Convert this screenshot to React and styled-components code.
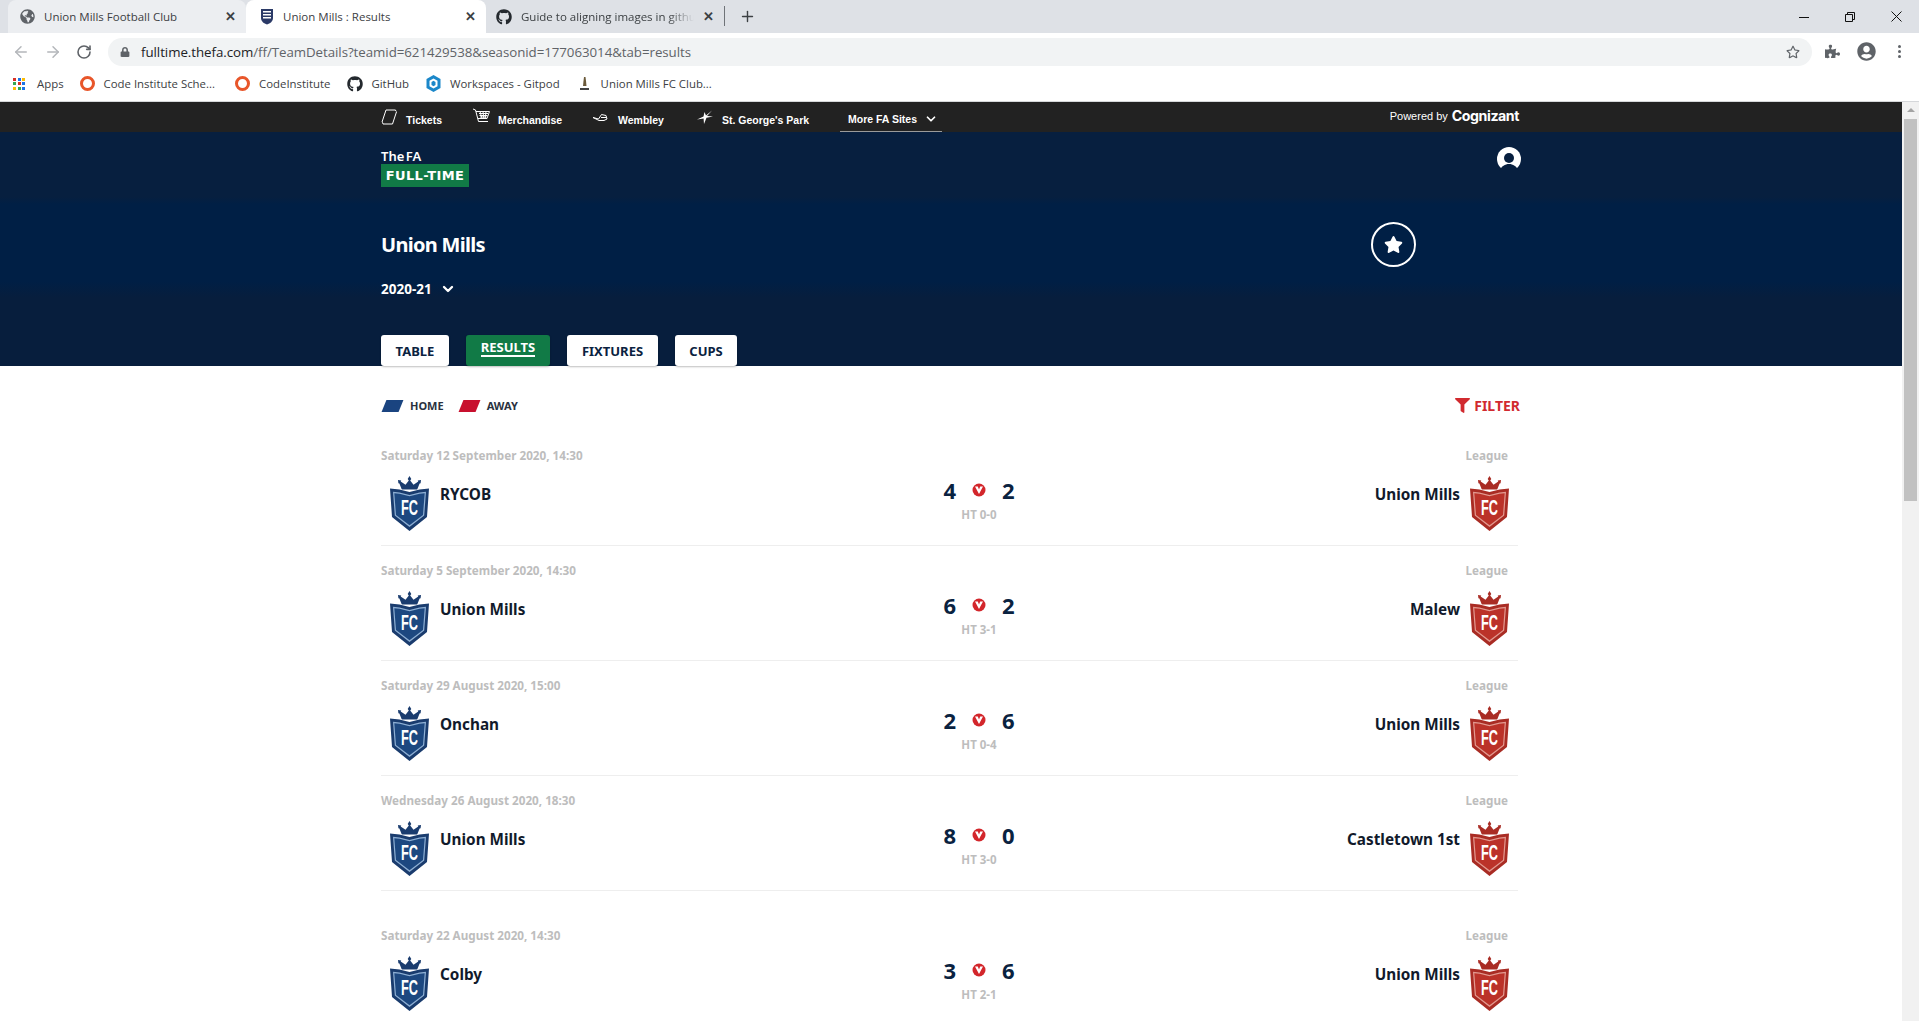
import React from 'react';
import styled, { createGlobalStyle } from 'styled-components';
import { ArrowLeft, ArrowRight, RotateCw, ChevronDown, Plus } from 'lucide-react';
import { FaGithub, FaGlobeAmericas, FaLock, FaPuzzlePiece, FaUserCircle, FaStar, FaFilter, FaRegStar } from 'react-icons/fa';

const GlobalStyle = createGlobalStyle`
  html, body { margin: 0; padding: 0; height: 100%; overflow: hidden; background: #fff; }
  * { box-sizing: border-box; }
`;

const Screen = styled.div`
  width: 1919px;
  height: 1021px;
  overflow: hidden;
  display: flex;
  flex-direction: column;
  font-family: "Noto Sans", Arial, sans-serif;
`;

/* browser chrome */
const TabStrip = styled.div`
  height: 33px;
  background: #dee1e6;
  display: flex;
  align-items: flex-end;
  padding-left: 8px;
  flex-shrink: 0;
`;
const Tab = styled.div`
  width: ${p => p.$w}px;
  height: 33px;
  display: flex;
  align-items: center;
  padding: 0 10px 0 ${p => p.$pad || 12}px;
  gap: 9px;
  color: #3c4043;
  font-family: "Open Sans", sans-serif;
  font-size: 11.5px;
  border-radius: 8px 8px 0 0;
  background: ${p => (p.$active ? '#fff' : p.$light ? '#eceef1' : 'transparent')};
  svg { flex-shrink: 0; }
`;
const TabLabel = styled.span`
  flex: 1;
  white-space: nowrap;
  overflow: hidden;
  mask-image: ${p => (p.$fade ? 'linear-gradient(to right, #000 85%, transparent)' : 'none')};
`;
const TabClose = styled.span`
  font-size: 13px;
  color: #3c4043;
  font-family: "Liberation Sans", sans-serif;
  font-weight: 700;
`;
const TabDivider = styled.div`
  width: 1px;
  height: 20px;
  background: #6f7378;
  margin: 0 14px 7px 0;
`;
const NewTab = styled.div`
  height: 33px;
  display: flex;
  align-items: center;
  color: #3c4043;
`;
const WindowButtons = styled.div`
  margin-left: auto;
  height: 33px;
  display: flex;
  align-items: center;
  gap: 36px;
  padding-right: 17px;
  color: #111;
`;

const Toolbar = styled.div`
  height: 33px;
  background: #fff;
  display: flex;
  align-items: center;
  padding: 4px 0 0 12px;
  color: #5f6368;
  flex-shrink: 0;
`;
const NavGroup = styled.div`
  display: flex;
  align-items: center;
  gap: 14px;
  width: 96px;
`;
const AddressBar = styled.div`
  width: 1704px;
  height: 28px;
  border-radius: 14px;
  background: #f1f3f4;
  display: flex;
  align-items: center;
  padding: 0 12px 0 12px;
  gap: 11px;
  font-family: "Open Sans", sans-serif;
  font-size: 13.3px;
  letter-spacing: -0.05px;
  color: #5f6368;
`;
const UrlText = styled.span`
  flex: 1;
  white-space: nowrap;
  b { font-weight: 400; color: #202124; }
`;
const ToolbarEnd = styled.div`
  display: flex;
  align-items: center;
  gap: 17px;
  margin-left: 13px;
  color: #5f6368;
`;
const Dots = styled.div`
  display: grid;
  gap: 2px;
  margin-left: 5px;
  span { width: 3px; height: 3px; border-radius: 50%; background: #5f6368; display: block; }
`;

const Bookmarks = styled.div`
  height: 36px;
  background: #fff;
  border-bottom: 1px solid #d5d7da;
  display: flex;
  align-items: center;
  padding-left: 13px;
  color: #3c4043;
  font-family: "Open Sans", sans-serif;
  font-size: 11.4px;
  flex-shrink: 0;
`;
const Bookmark = styled.div`
  display: flex;
  align-items: center;
  gap: ${p => p.$gap || 9}px;
  margin-right: ${p => p.$mr || 17}px;
  white-space: nowrap;
`;
const AppsGrid = styled.div`
  display: grid;
  grid-template-columns: repeat(3, 3px);
  gap: 1.5px;
`;
const AppDot = styled.i`
  width: 3px;
  height: 3px;
  background: ${p => p.$c};
`;
const Ring = styled.i`
  width: 15px;
  height: 15px;
  border-radius: 50%;
  border: 3.5px solid #e8562a;
`;

/* page */
const Viewport = styled.div`
  flex: 1;
  min-height: 0;
  display: flex;
`;
const Page = styled.main`
  flex: 1;
  min-width: 0;
  overflow: hidden;
`;
const Scrollbar = styled.div`
  width: 17px;
  background: #f1f1f1;
  display: flex;
  flex-direction: column;
  align-items: center;
  padding-top: 6px;
`;
const ScrollArrow = styled.div`
  width: 0;
  height: 0;
  border-left: 4px solid transparent;
  border-right: 4px solid transparent;
  border-bottom: 4px solid #a3a3a3;
`;
const ScrollThumb = styled.div`
  width: 13px;
  height: 382px;
  margin-top: 7px;
  background: #c1c1c1;
`;

const Container = styled.div`
  width: 1140px;
  margin: 0 auto;
`;

const TopBar = styled.div`
  height: 30px;
  background: #222;
  color: #fff;
  font-family: "Liberation Sans", Arial, sans-serif;
  font-size: 10.5px;
  font-weight: 700;
`;
const TopInner = styled(Container)`
  height: 30px;
  display: flex;
  align-items: center;
`;
const TopLink = styled.div`
  display: flex;
  align-items: center;
  width: ${p => p.$w}px;
  white-space: nowrap;
  padding-top: 5px;
  svg { width: 18px; height: 18px; margin: -6px 7px 0 0; flex-shrink: 0; }
`;
const MoreSites = styled.div`
  width: 102px;
  height: 30px;
  margin-left: 32px;
  padding: 5px 0 0 8px;
  display: flex;
  align-items: center;
  gap: 7px;
  border-bottom: 1px solid #9a9a9a;
`;
const Powered = styled.div`
  margin-left: auto;
  display: flex;
  align-items: center;
  gap: 4px;
  font-weight: 400;
  font-size: 11px;
  margin-top: -3px;
  padding-right: 2px;
`;
const Cognizant = styled.span`
  font-family: Inter, sans-serif;
  font-size: 14.2px;
  font-weight: 700;
  letter-spacing: -0.45px;
`;

const Hero = styled.section`
  height: 234px;
  background: linear-gradient(#071f3f 0, #071f3f 65px, #001f45 72px, #001f45 150px, #071e3d 165px);
  color: #fff;
`;
const HeroInner = styled(Container)`
  height: 234px;
  display: flex;
  flex-direction: column;
`;
const HeaderRow = styled.div`
  display: flex;
  justify-content: space-between;
  padding-top: 17px;
  height: 85px;
`;
const LogoTop = styled.div`
  font-size: 13px;
  line-height: 15px;
  font-weight: 600;
  word-spacing: -2px;
`;
const LogoBox = styled.div`
  width: 88px;
  height: 23px;
  background: #117a46;
  font-family: "DejaVu Sans", sans-serif;
  font-weight: 700;
  font-size: 13px;
  line-height: 23px;
  text-align: center;
  letter-spacing: 0.4px;
`;
const ProfileIcon = styled.svg`
  margin: -2px 0 0 0;
`;
const TitleRow = styled.div`
  display: flex;
  justify-content: space-between;
  height: 57px;
  padding-right: 105px;
  margin-top: 7px;
`;
const TeamTitle = styled.h1`
  margin: 0;
  font-size: 20px;
  font-weight: 700;
  line-height: 45px;
  letter-spacing: -0.7px;
`;
const StarButton = styled.div`
  width: 45px;
  height: 45px;
  border: 2.5px solid #fff;
  border-radius: 50%;
  display: flex;
  align-items: center;
  justify-content: center;
  font-size: 19px;
`;
const Season = styled.div`
  display: flex;
  align-items: center;
  gap: 8px;
  font-size: 13.5px;
  font-weight: 700;
  height: 24px;
`;
const TabRow = styled.nav`
  display: flex;
  gap: 17px;
  margin-top: 34px;
  height: 31px;
  flex-shrink: 0;
`;
const PageTab = styled.div`
  width: ${p => p.$w}px;
  height: 31px;
  border-radius: 3px;
  background: ${p => (p.$active ? '#117a46' : '#fff')};
  color: ${p => (p.$active ? '#fff' : '#0a2240')};
  box-shadow: 0 1px 2px rgba(0, 0, 0, 0.25);
  font-size: 13px;
  font-weight: 700;
  display: flex;
  align-items: center;
  justify-content: center;
  span {
    border-bottom: ${p => (p.$active ? '2px solid #fff' : 'none')};
    line-height: 16px;
    margin-top: ${p => (p.$active ? '-5px' : '0')};
  }
`;

const LegendRow = styled(Container)`
  height: 65px;
  padding-top: 14px;
  display: flex;
  align-items: center;
  font-size: 11px;
  font-weight: 700;
  color: #2a3240;
`;
const Swatch = styled.i`
  width: 17px;
  height: 12px;
  margin-left: 3px;
  margin-right: 7px;
  background: ${p => p.$c};
  transform: skewX(-22deg);
`;
const LegendLabel = styled.span`
  margin-right: 14px;
  margin-left: 2px;
`;
const FilterLink = styled.div`
  margin-left: auto;
  display: flex;
  align-items: center;
  gap: 4px;
  color: #d12a2f;
  font-size: 14px;
  padding-right: 1px;
`;

const Result = styled.article`
  height: 115px;
  margin-right: 3px;
  margin-top: ${p => (p.$gapped ? 20 : 0)}px;
  border-bottom: 1px solid ${p => (p.$last ? 'transparent' : '#eee')};
  padding-top: 17px;
`;
const MetaRow = styled.div`
  display: flex;
  justify-content: space-between;
  height: 14px;
  line-height: 14px;
  font-size: 11.7px;
  font-weight: 700;
  color: #bdbdbd;
  padding-right: 10px;
`;
const MatchGrid = styled.div`
  display: grid;
  grid-template-columns: 520px 156px 1fr;
  margin-top: 14px;
  padding: 0 9px 0 9px;
`;
const Team = styled.div`
  display: flex;
  gap: ${p => (p.$right ? 10 : 11)}px;
  justify-content: ${p => (p.$right ? 'flex-end' : 'flex-start')};
  font-size: 15.3px;
  font-weight: 700;
  color: #111a2b;
  line-height: 20px;
  span { margin-top: 8px; }
`;
const ScoreBlock = styled.div`
  margin-left: -9px;
  width: 156px;
  display: flex;
  flex-direction: column;
  align-items: center;
`;
const Score = styled.div`
  display: flex;
  align-items: center;
  gap: 16px;
  height: 28px;
  font-size: 22px;
  font-weight: 700;
  color: #0a2240;
`;
const HalfTime = styled.div`
  margin-top: 4px;
  font-size: 11.5px;
  line-height: 14px;
  font-weight: 700;
  color: #bdbdbd;
`;

/* svg drawings */
const Crest = ({ dark, mid, line }) => (
  <svg width="39" height="55" viewBox="0 0 39 55">
    <path
      fill={dark}
      d="M19.500 0l1.800 3-1.100 1.600 3.300 4.200 4.800-3.400-.6-1 3.300-.4-.4 3.300-1 .1-2.400 6.100H11.800L9.400 7.400l-1-.1L8 4l3.300.4-.6 1 4.800 3.400 3.300-4.200L17.700 3z"
    />
    <path fill={dark} d="M0 12.500l9.500 1 10 2.500 10-2.500 9.500-1-2 28.500L19.500 55 2 41z" />
    <path fill={line} d="M3 15.800l6.500.6 10 2.500 10-2.500 6.500-.6-1.800 23.800L19.500 51 4.800 39.600z" />
    <path fill={mid} d="M4.300 17.200l5.200.5 10 2.500 10-2.500 5.200-.5-1.700 21.700L19.500 49.300 6 38.900z" />
    <text
      x="19.500"
      y="39"
      fill="#fff"
      fontFamily="Liberation Sans, sans-serif"
      fontWeight="700"
      fontSize="22"
      textAnchor="middle"
      textLength="17"
      lengthAdjust="spacingAndGlyphs"
    >
      FC
    </text>
  </svg>
);
const BlueCrest = () => <Crest dark="#1a3c6e" mid="#1d4880" line="#8fb0d4" />;
const RedCrest = () => <Crest dark="#a92c24" mid="#bb3229" line="#e39a90" />;

const ScoreMark = () => (
  <svg width="14" height="14" viewBox="0 0 14 14">
    <circle cx="7" cy="7" r="6.500" fill="#d3262b" />
    <path fill="#fff" d="M3 3.500h2.800L7 6.500l1.200-3H11L7 11z" />
  </svg>
);

const TicketIcon = () => (
  <svg viewBox="0 0 18 18" fill="none" stroke="#fff" strokeWidth="1">
    <path d="M5 2h9.500c.2 1 .4 1.500 1 1.800L11.500 16H2c0-1-.4-1.600-1-1.900z" />
  </svg>
);
const CartIcon = () => (
  <svg viewBox="0 0 18 18" fill="none" stroke="#fff" strokeWidth="1">
    <path d="M0 1l2.500 1 3 11.500H15M3 3.500h13.500l-2.500 7H5M6 5.500h9M6.500 7.500h8M7 9h6.500M7 3.500l2 7M10 3.500l.8 7M13 3.500l-.8 7" />
  </svg>
);
const StadiumIcon = () => (
  <svg viewBox="0 0 18 18" fill="none" stroke="#fff" strokeWidth="1">
    <path d="M0 9.500l5.500 1.500 3-4.500 4.500 1 1 3.500-3 1.500H6zM8 9.500h5.500" />
  </svg>
);
const PlaneIcon = () => (
  <svg viewBox="0 0 18 18" fill="#fff">
    <path d="M15 2.500L10 8l6 .6-6.500 1.200L7 16 6.600 10.500 0 11.500l6.500-3L7.500 4l1.500 3.500z" />
  </svg>
);
const FaCrestIcon = () => (
  <svg width="14" height="17" viewBox="0 0 14 17">
    <path fill="#2b3a67" d="M1 1h12v9c0 3.500-3 5.500-6 6.500C4 15.500 1 13.500 1 10z" />
    <path fill="#fff" d="M3 3h8v1.500H3zM3 6h8v1.500H3zM3 9h8v1.500H3z" />
  </svg>
);
const GitpodIcon = () => (
  <svg width="15" height="17" viewBox="0 0 15 17">
    <path fill="#1b87c9" d="M7.500 0l7 4v9l-7 4-7-4V4z" />
    <path fill="#fff" d="M7.500 3.500l4 2.300v5.400l-4 2.300-4-2.300V5.800z" />
    <path fill="#1b87c9" d="M7.500 5.800l2 1.200v3l-2 1.200-2-1.200V7z" />
  </svg>
);
const ClubIcon = () => (
  <svg width="15" height="17" viewBox="0 0 15 17">
    <path fill="#6b5a3a" d="M7 2h1.500l.5 4 .5 5H6l.5-5z" />
    <path fill="#444" d="M3 13h9v2H3z" />
  </svg>
);
const MinimizeIcon = () => (
  <svg width="10" height="10" viewBox="0 0 10 10"><path d="M0 5.500h10" stroke="currentColor" /></svg>
);
const RestoreIcon = () => (
  <svg width="10" height="10" viewBox="0 0 10 10" fill="none" stroke="currentColor">
    <path d="M.5 2.500h7v7h-7zM2.500 2.500v-2h7v7h-2" />
  </svg>
);
const CloseIcon = () => (
  <svg width="11" height="11" viewBox="0 0 11 11"><path d="M.5.500l10 10M10.500.500l-10 10" stroke="currentColor" /></svg>
);

const appColours = ['#d93025', '#1a73e8', '#fbbc04', '#34a853', '#d93025', '#1a73e8', '#fbbc04', '#34a853', '#1a73e8'];

const results = [
  { date: 'Saturday 12 September 2020, 14:30', home: 'RYCOB', away: 'Union Mills', hs: 4, as: 2, ht: 'HT 0-0' },
  { date: 'Saturday 5 September 2020, 14:30', home: 'Union Mills', away: 'Malew', hs: 6, as: 2, ht: 'HT 3-1' },
  { date: 'Saturday 29 August 2020, 15:00', home: 'Onchan', away: 'Union Mills', hs: 2, as: 6, ht: 'HT 0-4' },
  { date: 'Wednesday 26 August 2020, 18:30', home: 'Union Mills', away: 'Castletown 1st', hs: 8, as: 0, ht: 'HT 3-0' },
  { date: 'Saturday 22 August 2020, 14:30', home: 'Colby', away: 'Union Mills', hs: 3, as: 6, ht: 'HT 2-1', gapped: true, last: true },
];

export default function App() {
  return (
    <Screen>
      <GlobalStyle />
      <TabStrip>
        <Tab $w={238} $light>
          <FaGlobeAmericas size={15} color="#5f6368" />
          <TabLabel>Union Mills Football Club</TabLabel>
          <TabClose>✕</TabClose>
        </Tab>
        <Tab $w={240} $active $pad={14}>
          <FaCrestIcon />
          <TabLabel>Union Mills : Results</TabLabel>
          <TabClose>✕</TabClose>
        </Tab>
        <Tab $w={238} $pad={10}>
          <FaGithub size={16} color="#24292e" />
          <TabLabel $fade>Guide to aligning images in github</TabLabel>
          <TabClose>✕</TabClose>
        </Tab>
        <TabDivider />
        <NewTab><Plus size={17} strokeWidth={2} /></NewTab>
        <WindowButtons>
          <MinimizeIcon />
          <RestoreIcon />
          <CloseIcon />
        </WindowButtons>
      </TabStrip>

      <Toolbar>
        <NavGroup>
          <ArrowLeft size={18} color="#b4b7bb" />
          <ArrowRight size={18} color="#b4b7bb" />
          <RotateCw size={16} color="#5f6368" strokeWidth={2.4} />
        </NavGroup>
        <AddressBar>
          <FaLock size={10} />
          <UrlText><b>fulltime.thefa.com</b>/ff/TeamDetails?teamid=621429538&amp;seasonid=177063014&amp;tab=results</UrlText>
          <FaRegStar size={14} />
        </AddressBar>
        <ToolbarEnd>
          <FaPuzzlePiece size={15} />
          <FaUserCircle size={19} />
          <Dots><span /><span /><span /></Dots>
        </ToolbarEnd>
      </Toolbar>

      <Bookmarks>
        <Bookmark $mr={16} $gap={12}>
          <AppsGrid>{appColours.map((c, i) => <AppDot key={i} $c={c} />)}</AppsGrid>
          Apps
        </Bookmark>
        <Bookmark $mr={20}><Ring />Code Institute Sche...</Bookmark>
        <Bookmark><Ring />CodeInstitute</Bookmark>
        <Bookmark $gap={8}><FaGithub size={16} color="#24292e" />GitHub</Bookmark>
        <Bookmark><GitpodIcon />Workspaces - Gitpod</Bookmark>
        <Bookmark><ClubIcon />Union Mills FC Club...</Bookmark>
      </Bookmarks>

      <Viewport>
        <Page>
          <TopBar>
            <TopInner>
              <TopLink $w={92}><TicketIcon />Tickets</TopLink>
              <TopLink $w={120}><CartIcon />Merchandise</TopLink>
              <TopLink $w={104}><StadiumIcon />Wembley</TopLink>
              <TopLink $w={111}><PlaneIcon />St. George's Park</TopLink>
              <MoreSites>More FA Sites <ChevronDown size={14} strokeWidth={3} /></MoreSites>
              <Powered>Powered by <Cognizant>Cognizant</Cognizant></Powered>
            </TopInner>
          </TopBar>

          <Hero>
            <HeroInner>
              <HeaderRow>
                <div>
                  <LogoTop>The FA</LogoTop>
                  <LogoBox>FULL-TIME</LogoBox>
                </div>
                <ProfileIcon width="24" height="24" viewBox="0 0 24 24">
                  <circle cx="12" cy="12" r="12" fill="#fff" />
                  <circle cx="12" cy="11" r="5" fill="#071f3f" />
                  <path fill="#071f3f" d="M2.500 24c2-5 5.500-7 9.500-7s7.500 2 9.500 7z" />
                </ProfileIcon>
              </HeaderRow>
              <TitleRow>
                <TeamTitle>Union Mills</TeamTitle>
                <StarButton><FaStar /></StarButton>
              </TitleRow>
              <Season>2020-21 <ChevronDown size={16} strokeWidth={3.5} /></Season>
              <TabRow>
                <PageTab $w={68}><span>TABLE</span></PageTab>
                <PageTab $w={84} $active><span>RESULTS</span></PageTab>
                <PageTab $w={91}><span>FIXTURES</span></PageTab>
                <PageTab $w={62}><span>CUPS</span></PageTab>
              </TabRow>
            </HeroInner>
          </Hero>

          <LegendRow>
            <Swatch $c="#1a4480" />
            <LegendLabel>HOME</LegendLabel>
            <Swatch $c="#c8102e" />
            <LegendLabel>AWAY</LegendLabel>
            <FilterLink><FaFilter size={15} />FILTER</FilterLink>
          </LegendRow>

          <Container>
            {results.map(r => (
              <Result key={r.date} $gapped={r.gapped} $last={r.last}>
                <MetaRow>
                  <span>{r.date}</span>
                  <span>League</span>
                </MetaRow>
                <MatchGrid>
                  <Team>
                    <BlueCrest />
                    <span>{r.home}</span>
                  </Team>
                  <ScoreBlock>
                    <Score>
                      <span>{r.hs}</span>
                      <ScoreMark />
                      <span>{r.as}</span>
                    </Score>
                    <HalfTime>{r.ht}</HalfTime>
                  </ScoreBlock>
                  <Team $right>
                    <span>{r.away}</span>
                    <RedCrest />
                  </Team>
                </MatchGrid>
              </Result>
            ))}
          </Container>
        </Page>
        <Scrollbar>
          <ScrollArrow />
          <ScrollThumb />
        </Scrollbar>
      </Viewport>
    </Screen>
  );
}
